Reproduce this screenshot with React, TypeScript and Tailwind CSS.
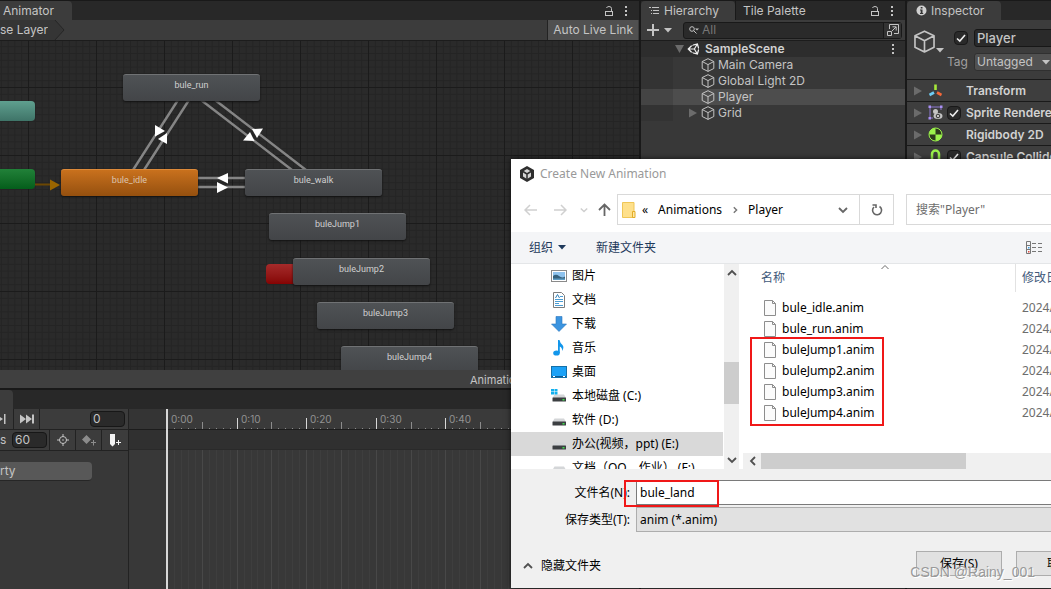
import { type ReactNode } from "react";
import { FaUnity } from "react-icons/fa";

interface StateNode {
  name: string;
  left: number;
  top: number;
  active?: boolean;
}

const nodes: StateNode[] = [
  { name: "bule_run", left: 123, top: 33 },
  { name: "bule_idle", left: 61, top: 128, active: true },
  { name: "bule_walk", left: 245, top: 128 },
  { name: "buleJump1", left: 269, top: 172 },
  { name: "buleJump2", left: 293, top: 217 },
  { name: "buleJump3", left: 317, top: 261 },
  { name: "buleJump4", left: 341, top: 305 },
];

const files = [
  "bule_idle.anim",
  "bule_run.anim",
  "buleJump1.anim",
  "buleJump2.anim",
  "buleJump3.anim",
  "buleJump4.anim",
];

const frameWidth = 6.96;

function Kebab() {
  return (
    <svg width="4" height="12" viewBox="0 0 4 12" fill="#c4c4c4">
      <rect x="1" y="1" width="2" height="2" />
      <rect x="1" y="5" width="2" height="2" />
      <rect x="1" y="9" width="2" height="2" />
    </svg>
  );
}

function Lock() {
  return (
    <svg width="10" height="12" viewBox="0 0 10 12" fill="none" stroke="#c4c4c4">
      <rect x="1.5" y="6.5" width="7" height="4" />
      <path d="M7.5 6.5V3.5Q7.500 1.500 5 1.500Q3 1.500 2.500 3" />
    </svg>
  );
}

function Cube({ size }: { size: number }) {
  return (
    <svg width={size} height={size} viewBox="0 0 14 14" fill="none" stroke="#c4c4c4" strokeWidth="1" strokeLinejoin="round">
      <path d="M7 .7 12.800 3.500V10.500L7 13.400 1.200 10.500V3.500ZM1.200 3.500 7 6.600 12.800 3.500M7 6.600V13.400" />
    </svg>
  );
}

function Caret({ color = "#c4c4c4" }: { color?: string }) {
  return (
    <svg width="8" height="5" viewBox="0 0 8 5" fill={color}>
      <path d="M0 0H8L4 4.500Z" />
    </svg>
  );
}

function Foldout() {
  return (
    <svg className="shrink-0" width="8" height="10" viewBox="0 0 8 10" fill="#6b6b6b">
      <path d="M0 0.500 8 5 0 9.500Z" />
    </svg>
  );
}

function Check({ label }: { label: string }) {
  return (
    <span className="grid size-[14px] shrink-0 place-items-center">
      <input
        type="checkbox"
        aria-label={label}
        defaultChecked
        className="peer col-start-1 row-start-1 size-[14px] appearance-none rounded-sm border border-[#191919] bg-[#2a2a2a]"
      />
      <svg
        className="pointer-events-none invisible col-start-1 row-start-1 peer-checked:visible"
        width="12"
        height="12"
        viewBox="0 0 12 12"
        fill="none"
        stroke="#eee"
        strokeWidth="1.6"
      >
        <path d="M2 6.500 4.800 9 10 3" />
      </svg>
    </span>
  );
}

function Chevron({ dir, color = "#505050", size = 10 }: { dir: "up" | "down" | "left" | "right"; color?: string; size?: number }) {
  const paths = {
    up: "M1 7 5 3 9 7",
    down: "M1 3 5 7 9 3",
    left: "M7 1 3 5 7 9",
    right: "M3.500 1.500 7 5 3.500 8.500",
  };
  return (
    <svg width={size} height={size} viewBox="0 0 10 10" fill="none" stroke={color} strokeWidth="1.800">
      <path d={paths[dir]} />
    </svg>
  );
}

function Transitions() {
  return (
    <svg className="absolute inset-0 size-full">
      <defs>
        <pattern id="minor" x="28" y="46" width="6.8" height="6.8" patternUnits="userSpaceOnUse">
          <path d="M.5 0V6.800M0 .5H6.800" stroke="#242424" />
        </pattern>
        <pattern id="major" x="28" y="46" width="68" height="68" patternUnits="userSpaceOnUse">
          <path d="M.5 0V68M0 .5H68" stroke="#1b1b1b" />
        </pattern>
      </defs>
      <rect width="100%" height="100%" fill="url(#minor)" />
      <rect width="100%" height="100%" fill="url(#major)" />
      <g stroke="#858585" strokeWidth="2.4">
        <path d="M178 59 133 129M189 59 144 129" />
        <path d="M201 59 292 129M215 59 306 129" />
        <path d="M198 137H245M198 146H245" />
      </g>
      <g fill="#fff">
        <path d="M155 84 165 90 155 95.500Z" />
        <path d="M158 98 167 92 167 103Z" />
        <path d="M243 99.500 250 91 254.500 100Z" />
        <path d="M252 88 263 87.500 257 97Z" />
        <path d="M217 137 228 132V142.500Z" />
        <path d="M228 146.500 217 141V152Z" />
      </g>
      <path d="M35 143.500H51" stroke="#6b4703" strokeWidth="2" />
      <path d="M50 138.500 60 144 50 149.500Z" fill="#9a6500" />
    </svg>
  );
}

function Animator() {
  return (
    <section className="flex min-h-0 flex-1 flex-col">
      <div className="flex h-[19px] items-stretch justify-between bg-[#282828] pr-[11px]">
        <button className="w-[72px] rounded-tr bg-[#3c3c3c] pl-[3px] text-left">Animator</button>
        <div className="flex items-center gap-[10px]">
          <Lock />
          <Kebab />
        </div>
      </div>
      <div className="flex h-[21px] items-stretch justify-between border-b border-[#1c1c1c] bg-[#3c3c3c]">
        <button className="flex items-center">
          <span className="flex h-full items-center bg-[#353535]">se Layer</span>
          <svg width="17" height="20" viewBox="0 0 17 20">
            <path d="M0 0H7L16 10 7 20H0Z" fill="#353535" />
            <path d="M7 0 16 10 7 20" fill="none" stroke="#262626" />
          </svg>
        </button>
        <button className="mr-px border-l border-[#232323] bg-[#505050] px-[5px]">Auto Live Link</button>
      </div>
      <div className="relative flex-1 overflow-hidden bg-[#2a2a2a]">
        <Transitions />
        <div className="absolute top-[60px] left-0 h-5 w-[35px] rounded-r-sm bg-linear-to-b from-[#5fa08f] to-[#3f7468]" />
        <div className="absolute top-[128px] left-0 h-5 w-[35px] rounded-r-sm bg-linear-to-b from-[#218139] to-[#045e1b]" />
        <div className="absolute top-[223px] left-[266px] h-5 w-[60px] rounded-sm bg-linear-to-b from-[#a52a2a] to-[#850303]" />
        {nodes.map((node) => (
          <div
            key={node.name}
            style={{ left: node.left, top: node.top }}
            className={`absolute h-[27px] w-[137px] rounded-[3px] border-t pt-[3px] text-center font-['Roboto',sans-serif] text-[9px] leading-[14px] shadow-[0_1px_2px_#111] ${
              node.active
                ? "border-[#dd8a3a] bg-linear-to-b from-[#c9711d] to-[#95500f] text-[#dcc4ae]"
                : "border-[#707274] bg-linear-to-b from-[#4f5255] to-[#434548] text-[#d0d0d0]"
            }`}
          >
            {node.name}
          </div>
        ))}
      </div>
      <div className="flex h-[18px] items-center justify-end bg-[#404040] pt-[2px]">
        <span className="w-[169px] text-[11px]">Animations</span>
      </div>
    </section>
  );
}

function Timeline() {
  const frames = Array.from({ length: 50 }, (_, i) => i);
  return (
    <svg className="min-w-0 flex-1" height="180">
      <rect width="100%" height="20" fill="#3a3a3a" />
      <rect width="37" height="20" fill="#343434" />
      <rect y="20" width="100%" height="1" fill="#1c1c1c" />
      <rect y="21" width="100%" height="19" fill="#303030" />
      <rect y="40" width="100%" height="1" fill="#2a2a2a" />
      {frames.map((f) => {
        const x = Math.round(38 + f * frameWidth);
        const tick = f % 10 === 0 ? 11 : f % 5 === 0 ? 7 : 1;
        return (
          <g key={f}>
            <rect x={x} y={20 - tick} width="1" height={tick} fill={f % 10 === 0 ? "#d8d8d8" : "#8c8c8c"} />
            <rect x={x} y="41" width="1" height="140" fill={f % 5 === 0 ? "#484848" : "#3e3e3e"} />
            {f % 10 === 0 && (
              <text x={x + 4} y="14" fontSize="10" fill="#929292">
                0:{String(f).padStart(2, "0")}
              </text>
            )}
          </g>
        );
      })}
      <rect x="37" width="2" height="180" fill="#d8d8d8" />
    </svg>
  );
}

function Animation() {
  return (
    <section className="border-t-2 border-[#191919]">
      <div className="h-[19px] bg-[#282828]">
        <div className="h-full w-[13px] rounded-tr bg-[#3c3c3c]" />
      </div>
      <div className="flex">
        <div className="w-[129px] border-r border-[#222] text-[12px]">
          <div className="flex h-[21px] items-center border-b border-[#222] bg-[#3c3c3c]">
            <button aria-label="Next frame" className="flex h-full w-[14px] items-center border-r border-[#222]">
              <svg width="6" height="10" viewBox="0 0 6 10" fill="#c4c4c4">
                <path d="M0 3 3 5 0 7ZM4 0H5.500V10H4Z" />
              </svg>
            </button>
            <button aria-label="Last frame" className="flex h-full w-[26px] items-center justify-center border-r border-[#222]">
              <svg width="14" height="10" viewBox="0 0 14 10" fill="#c4c4c4">
                <path d="M0 .5 6 5 0 9.500ZM6 .5 12 5 6 9.500ZM12 .5H14V9.500H12Z" />
              </svg>
            </button>
            <input aria-label="Current frame" defaultValue="0" className="mr-[3px] ml-auto h-4 w-[35px] rounded-sm border border-[#171717] bg-[#2a2a2a] px-[2px]" />
          </div>
          <div className="flex h-[21px] items-center border-b border-[#222] bg-[#3c3c3c]">
            <label htmlFor="samples" className="w-3">s</label>
            <input id="samples" defaultValue="60" className="h-4 w-[35px] rounded-sm border border-[#171717] bg-[#2a2a2a] px-[2px]" />
            <button aria-label="Filter by selection" className="ml-[2px] flex h-full w-[27px] items-center justify-center border-x border-[#222]">
              <svg width="12" height="12" viewBox="0 0 12 12" fill="none" stroke="#c4c4c4">
                <circle cx="6" cy="6" r="3.5" />
                <path d="M6 0V3M6 9V12M0 6H3M9 6H12" />
                <circle cx="6" cy="6" r=".8" fill="#c4c4c4" stroke="none" />
              </svg>
            </button>
            <button aria-label="Add keyframe" className="flex h-full w-[26px] items-center justify-center border-r border-[#222]">
              <svg width="14" height="12" viewBox="0 0 14 12" fill="#8c8c8c">
                <path d="M4.500 1 9 5.500 4.500 10 0 5.500ZM11 6H12V8H14V9H12V11.500H11V9H9V8H11Z" />
              </svg>
            </button>
            <button aria-label="Add event" className="flex h-full flex-1 items-center justify-center">
              <svg width="12" height="14" viewBox="0 0 12 14" fill="#f4f4f4">
                <path d="M1 1H6V11L3.500 13.500 1 11ZM9 7H10V9H12V10H10V12H9V10H7V9H9Z" />
              </svg>
            </button>
          </div>
          <div className="pt-[11px]">
            <button className="h-[19px] w-[92px] rounded-r-sm border-b border-[#262626] bg-[#585858] text-left leading-[18px]">rty</button>
          </div>
        </div>
        <Timeline />
      </div>
    </section>
  );
}

function HierarchyItem({ name, selected, parent }: { name: string; selected?: boolean; parent?: boolean }) {
  return (
    <li className={`flex h-4 items-center ${selected ? "bg-[#4d4d4d]" : ""}`}>
      <span className={`h-full w-8 ${selected ? "bg-[#444]" : "bg-[#333]"}`} />
      <span className="flex w-7 justify-end pr-1">{parent && <Foldout />}</span>
      <Cube size={14} />
      <span className="pl-[3px]">{name}</span>
    </li>
  );
}

function Hierarchy() {
  return (
    <section className="w-[268px] shrink-0 border-x-2 border-[#191919] bg-[#383838]">
      <div className="flex h-[19px] items-stretch bg-[#282828] pr-[11px]">
        <button className="flex w-[94px] items-center gap-1 rounded-t bg-[#3c3c3c] pl-2">
          <svg width="11" height="10" viewBox="0 0 11 10" fill="#c4c4c4">
            <path d="M0 1H2V2H0ZM3 1H10V2H3ZM2 4H3V5H2ZM4 4H10V5H4ZM2 7H3V8H2ZM4 7H10V8H4Z" />
          </svg>
          Hierarchy
        </button>
        <button className="border-l border-[#191919] pl-[7px]">Tile Palette</button>
        <div className="ml-auto flex items-center gap-[10px]">
          <Lock />
          <Kebab />
        </div>
      </div>
      <div className="flex h-[21px] items-center border-b border-[#1c1c1c] bg-[#3c3c3c] pr-[3px] pl-[6px]">
        <button aria-label="Create" className="flex items-center gap-[5px]">
          <svg width="12" height="12" viewBox="0 0 12 12" stroke="#c4c4c4" strokeWidth="2">
            <path d="M6 0V12M0 6H12" />
          </svg>
          <Caret />
        </button>
        <div className="ml-[11px] flex h-[17px] flex-1 items-center rounded-[3px] border border-[#191919] bg-[#2a2a2a] pl-[5px]">
          <svg width="11" height="10" viewBox="0 0 11 10" fill="none" stroke="#c4c4c4">
            <circle cx="3" cy="4" r="2.300" />
            <path d="M4.800 5.800 7.500 8.500" />
            <path d="M6 3.500H10L8 5.500Z" fill="#c4c4c4" stroke="none" />
          </svg>
          <input aria-label="Search hierarchy" placeholder="All" className="w-0 flex-1 pl-[2px] placeholder:text-[#777]" />
          <button aria-label="Open in search" className="flex h-full w-[18px] items-center justify-center border-l border-[#191919] bg-[#333]">
            <svg width="12" height="12" viewBox="0 0 12 12" fill="none" stroke="#c4c4c4">
              <path d="M2.500 5V.5H11.500V9.500H7M.5 7.500H4.500V11.500H.5ZM5 7 9 3M5.500 2.800H9.200V6.500" />
            </svg>
          </button>
        </div>
      </div>
      <div className="flex h-4 items-center bg-[#2d2d2d] pr-[10px] pl-[34px] font-semibold text-[#d2d2d2]">
        <svg width="10" height="8" viewBox="0 0 10 8" fill="#6b6b6b">
          <path d="M0 0H9L4.500 8Z" />
        </svg>
        <FaUnity className="ml-[2px] text-[14px] text-[#f0f0f0]" />
        <span className="flex-1 pl-1">SampleScene</span>
        <Kebab />
      </div>
      <ul>
        <HierarchyItem name="Main Camera" />
        <HierarchyItem name="Global Light 2D" />
        <HierarchyItem name="Player" selected />
        <HierarchyItem name="Grid" parent />
      </ul>
    </section>
  );
}

function ComponentRow({ name, icon, check }: { name: string; icon: ReactNode; check?: boolean }) {
  return (
    <div className="flex h-[22px] items-center border-t border-[#1a1a1a] bg-[#3e3e3e] pl-[7px]">
      <Foldout />
      <span className="ml-[6px] w-4 shrink-0">{icon}</span>
      <span className="ml-[3px] flex w-[19px] shrink-0">{check && <Check label={name} />}</span>
      <h3 className="font-semibold whitespace-nowrap text-[#d2d2d2]">{name}</h3>
    </div>
  );
}

function Inspector() {
  return (
    <section className="w-[144px] shrink-0 overflow-hidden bg-[#383838]">
      <div className="flex h-[19px] items-stretch bg-[#282828]">
        <button className="flex w-[94px] items-center gap-1 rounded-t bg-[#3c3c3c] pl-[9px]">
          <svg width="11" height="11" viewBox="0 0 11 11">
            <circle cx="5.500" cy="5.500" r="5" fill="#d0d0d0" />
            <path d="M4.700 2H6.500V3.500H4.700ZM4 4.500H6.500V8H7.200V9H4V8H4.700V5.500H4Z" fill="#333" />
          </svg>
          Inspector
        </button>
      </div>
      <div className="flex h-[59px] bg-[#3c3c3c] pt-[9px] pl-[6px]">
        <div className="flex h-6 w-[34px] shrink-0 items-end pt-1">
          <Cube size={23} />
          <Caret />
        </div>
        <div className="flex flex-1 flex-col gap-[6px]">
          <div className="flex items-center gap-[6px] pl-[7px]">
            <Check label="Active" />
            <input aria-label="Name" defaultValue="Player" className="h-[18px] w-20 rounded-[3px] border border-[#171717] bg-[#2a2a2a] px-[2px] text-[13px] font-medium" />
          </div>
          <div className="flex items-center">
            <label htmlFor="tag" className="w-[27px] shrink-0 text-[#a0a0a0]">Tag</label>
            <div className="relative">
              <select id="tag" className="h-[18px] w-[84px] appearance-none rounded-[3px] border border-[#303030] bg-[#515151] px-[2px]">
                <option>Untagged</option>
              </select>
              <span className="pointer-events-none absolute top-[7px] right-2">
                <Caret />
              </span>
            </div>
          </div>
        </div>
      </div>
      <ComponentRow
        name="Transform"
        icon={
          <svg width="15" height="15" viewBox="0 0 15 15" strokeWidth="2.600">
            <path d="M7.500 1.500V7" stroke="#a7e83a" />
            <path d="M6 9.500 1.500 12" stroke="#6fcdf5" />
            <path d="M9 9.500 13.500 12" stroke="#f4683a" />
          </svg>
        }
      />
      <ComponentRow
        name="Sprite Renderer"
        check
        icon={
          <svg width="15" height="15" viewBox="0 0 15 15" fill="none">
            <path d="M2 13V2H13V5M2 13H5" stroke="#8d78cf" />
            <path d="M.5 .5H3V3H.5ZM12 .5H14.500V3H12ZM.5 12H3V14.500H.5Z" fill="#a98ff5" />
            <circle cx="7.500" cy="6.500" r="2.500" fill="#c4c4c4" />
            <ellipse cx="10" cy="11" rx="4.500" ry="3" fill="#c4c4c4" />
            <circle cx="10" cy="11" r="1.800" fill="#c4c4c4" stroke="#333" />
          </svg>
        }
      />
      <ComponentRow
        name="Rigidbody 2D"
        icon={
          <svg width="15" height="15" viewBox="0 0 15 15">
            <circle cx="7.500" cy="7.500" r="6.500" fill="#2d3a1c" stroke="#9bf24b" />
            <path d="M7.500 7.500V1A6.500 6.500 0 0 0 1 7.500ZM7.500 7.500V14A6.500 6.500 0 0 0 14 7.500Z" fill="#9bf24b" />
          </svg>
        }
      />
      <ComponentRow
        name="Capsule Collider 2D"
        check
        icon={
          <svg width="15" height="15" viewBox="0 0 15 15">
            <rect x="4" y="1.500" width="7" height="13" rx="3.500" fill="none" stroke="#9bf24b" strokeWidth="2.500" />
          </svg>
        }
      />
    </section>
  );
}

function Drive({ system }: { system?: boolean }) {
  return (
    <svg width="16" height="16" viewBox="0 0 16 16">
      <path d="M3.500 6.500H13L15 10H1.500Z" fill="#d4d6d8" />
      <rect x="1.500" y="9.500" width="13.500" height="4" rx=".5" fill="#3c3f42" />
      <rect x="11.500" y="11" width="2" height="1.500" fill="#3fe04b" />
      {system && <path d="M0 1H3V3.500H0ZM3.500 1H6.500V3.500H3.500ZM0 4H3V6.500H0ZM3.500 4H6.500V6.500H3.500Z" fill="#12b0ee" />}
    </svg>
  );
}

const places = [
  {
    name: "图片",
    icon: (
      <svg width="16" height="16" viewBox="0 0 16 16">
        <rect x=".5" y="2.500" width="15" height="11" fill="#fff" stroke="#8a8a8a" />
        <rect x="2" y="4" width="12" height="8" fill="#8fc3ee" />
        <path d="M2 8Q5 5.500 8 8T14 8.500V12H2Z" fill="#35617d" />
        <path d="M2 10.500H14V12H2Z" fill="#5f9dc4" />
      </svg>
    ),
  },
  {
    name: "文档",
    icon: (
      <svg width="16" height="16" viewBox="0 0 16 16">
        <path d="M2.500 .5H10.500L13.500 3.500V15.500H2.500Z" fill="#fff" stroke="#7d7d7d" />
        <path d="M4 7.500H12M4 9.500H12M4 11.500H8M4 13.500H12M9 4.500H12" stroke="#4b9dd4" />
        <path d="M4.500 6 6.500 2.500 8.500 6" fill="none" stroke="#2f7fb8" />
      </svg>
    ),
  },
  {
    name: "下载",
    icon: (
      <svg width="16" height="16" viewBox="0 0 16 16">
        <path d="M5 .5H11V8H15.500L8 15.500 .5 8H5Z" fill="#3b94e0" stroke="#2a76bd" strokeWidth=".6" />
      </svg>
    ),
  },
  {
    name: "音乐",
    icon: (
      <svg width="16" height="16" viewBox="0 0 16 16" fill="#1296eb">
        <ellipse cx="5.500" cy="13" rx="3.300" ry="2.600" />
        <path d="M7 0H8.500Q9 3 11.500 5 13.500 7.500 11 11 11.500 7.500 8.800 6.500V13H7Z" />
      </svg>
    ),
  },
  {
    name: "桌面",
    icon: (
      <svg width="16" height="16" viewBox="0 0 16 16">
        <rect x=".5" y="2.500" width="15" height="11" fill="#1ba1f6" stroke="#1470a8" />
        <path d="M1 12H15V13H1Z" fill="#0c5a94" />
        <path d="M2 12H4V13H2ZM12 12H14V13H12Z" fill="#fff" />
      </svg>
    ),
  },
  { name: "本地磁盘 (C:)", icon: <Drive system /> },
  { name: "软件 (D:)", icon: <Drive /> },
  { name: "办公(视频，ppt) (E:)", icon: <Drive />, selected: true },
  { name: "文档（QQ，作业） (F:)", icon: <Drive /> },
];

function FileList() {
  return (
    <div className="relative flex min-w-0 flex-1 flex-col overflow-hidden">
      <table className="w-[420px] table-fixed text-left">
        <thead>
          <tr className="h-[33px] align-top text-[#41597a]">
            <th className="w-[273px] p-0 pl-[18px] font-normal">
              <div className="flex h-7 items-center border-r border-[#e2e2e2]">
                名称
                <span className="ml-[96px] self-start">
                  <svg width="8" height="6" viewBox="0 0 8 6" fill="none" stroke="#6b6b6b">
                    <path d="M.5 5 4 1.500 7.500 5" />
                  </svg>
                </span>
              </div>
            </th>
            <th className="p-0 pl-[6px] leading-7 font-normal">修改日期</th>
          </tr>
        </thead>
        <tbody>
          {files.map((file) => (
            <tr key={file} className="h-[21px]">
              <td className="p-0 pl-[21px]">
                <div className="flex items-center gap-[6px]">
                  <svg width="12" height="16" viewBox="0 0 12 16">
                    <path d="M.5 .5H8.500L11.500 3.500V15.500H.5Z" fill="#fbfbfb" stroke="#8d8d8d" />
                    <path d="M8.500 .5V3.500H11.500" fill="none" stroke="#8d8d8d" />
                  </svg>
                  {file}
                </div>
              </td>
              <td className="p-0 pl-[6px] text-[#6d6d6d]">2024/</td>
            </tr>
          ))}
        </tbody>
      </table>
      <div className="absolute top-[73px] left-[7px] h-[89px] w-[134px] border-2 border-[#f01818]" />
      <div className="mt-auto flex h-4 items-center bg-[#f0f0f0] pl-[5px]">
        <Chevron dir="left" />
        <div className="ml-[3px] h-full w-[205px] bg-[#cdcdcd]" />
      </div>
    </div>
  );
}

function SaveDialog() {
  return (
    <div
      role="dialog"
      aria-label="Create New Animation"
      className="absolute top-[158px] right-0 left-[511px] overflow-hidden bg-white font-['Noto_Sans','Noto_Sans_CJK_SC',sans-serif] text-[12px] text-black shadow-[0_0_6px_#000a]"
    >
      <div className="flex h-[30px] items-center gap-[6px] pl-[9px] text-[#999]">
        <svg width="14" height="16" viewBox="0 0 14 16">
          <path d="M7 0 14 4V12L7 16 0 12V4Z" fill="#2e2e2e" />
          <path d="M7 3 11 5.500V10.500L7 13 3 10.500V5.500Z" fill="#d5d5d5" />
          <path d="M7 8V13M7 8 3 5.500M7 8 11 5.500" stroke="#2e2e2e" strokeWidth="1.500" />
        </svg>
        Create New Animation
      </div>
      <div className="flex items-center pt-[5px] pb-[7px]">
        <div className="flex w-[106px] items-center pl-[13px]">
          <button aria-label="Back">
            <svg width="13" height="12" viewBox="0 0 13 12" fill="none" stroke="#d0d0d0" strokeWidth="1.500">
              <path d="M13 6H1M6 1 1 6 6 11" />
            </svg>
          </button>
          <button aria-label="Forward" className="ml-[17px]">
            <svg width="13" height="12" viewBox="0 0 13 12" fill="none" stroke="#d0d0d0" strokeWidth="1.500">
              <path d="M0 6H12M7 1 12 6 7 11" />
            </svg>
          </button>
          <button aria-label="Recent" className="ml-[13px]">
            <Chevron dir="down" color="#cfcfcf" size={8} />
          </button>
          <button aria-label="Up" className="ml-[10px]">
            <svg width="13" height="13" viewBox="0 0 13 13" fill="none" stroke="#666" strokeWidth="1.800">
              <path d="M6.500 13V1.500M1 7 6.500 1.500 12 7" />
            </svg>
          </button>
        </div>
        <div className="flex h-[31px] w-[277px] items-center border border-[#d9d9d9] pl-1">
          <svg width="14" height="16" viewBox="0 0 14 16">
            <path d="M.5 .5H12V15.500H.5Z" fill="#fee08b" stroke="#efc656" />
            <path d="M10.500 9.500H13V15.500H10.500Z" fill="#ffe9a6" stroke="#e3ad27" />
          </svg>
          <span className="pl-[6px]">«</span>
          <span className="pl-[10px]">Animations</span>
          <span className="px-[9px]"><Chevron dir="right" color="#777" size={8} /></span>
          <span className="flex-1">Player</span>
          <button aria-label="History" className="mr-[11px]">
            <Chevron dir="down" color="#666" />
          </button>
          <button aria-label="Refresh" className="flex h-full w-[34px] items-center justify-center border-l border-[#d9d9d9]">
            <svg width="12" height="12" viewBox="0 0 12 12" fill="none" stroke="#666" strokeWidth="1.600">
              <path d="M8.500 2.500A4.500 4.500 0 1 1 3 3M5 4V1H1.500" />
            </svg>
          </button>
        </div>
        <input aria-label="搜索" placeholder={'搜索"Player"'} className="ml-3 h-[31px] w-0 flex-1 border border-r-0 border-[#d9d9d9] px-[9px] placeholder:text-[#6d6d6d]" />
      </div>
      <div className="flex h-8 items-center border-b border-[#e4e6e8] bg-[#f4f5f7] pr-[9px] pl-[18px] text-[#1e395b]">
        <button className="flex items-center gap-[5px]">
          组织 <Caret color="#1e395b" />
        </button>
        <button className="ml-[30px]">新建文件夹</button>
        <button aria-label="View" className="ml-auto">
          <svg width="16" height="13" viewBox="0 0 16 13" fill="none" stroke="#777">
            <path d="M.5 .5H4.500V12.500H.5ZM.5 4.500H4.500M.5 8.500H4.500M6 2.500H10M12 2.500H16M6 6.500H10M12 6.500H16M6 10.500H10M12 10.500H16" />
            <path d="M2 6H3.500V7.500H2Z" fill="#3d9be0" stroke="none" />
            <path d="M2 10H3.500V11.500H2Z" fill="#e04a3d" stroke="none" />
          </svg>
        </button>
      </div>
      <div className="flex h-[205px]">
        <ul className="w-[212px] overflow-hidden">
          {places.map((place) => (
            <li key={place.name} className={`flex h-6 items-center gap-[5px] pl-10 whitespace-nowrap ${place.selected ? "bg-[#d9d9d9]" : ""}`}>
              {place.icon}
              {place.name}
            </li>
          ))}
        </ul>
        <div className="ml-px flex w-[15px] flex-col items-center justify-between bg-[#f0f0f0] py-1">
          <Chevron dir="up" />
          <div className="mt-8 h-[42px] w-full bg-[#cdcdcd]" />
          <Chevron dir="down" />
        </div>
        <div className="ml-1 flex min-w-0 flex-1">
          <FileList />
        </div>
      </div>
      <div className="bg-[#f0f0f0] pt-[11px] pb-3">
        <div className="relative flex flex-col gap-[2px]">
          <div className="flex items-center">
            <label htmlFor="filename" className="w-[125px] pr-[6px] text-right">文件名(N):</label>
            <input id="filename" defaultValue="bule_land" className="h-[25px] w-0 flex-1 border border-r-0 border-[#7a7a7a] bg-white px-[3px]" />
          </div>
          <div className="flex items-center">
            <label htmlFor="filetype" className="w-[125px] pr-[6px] text-right">保存类型(T):</label>
            <select id="filetype" className="h-[25px] w-0 flex-1 appearance-none border border-r-0 border-[#adadad] bg-[#e1e1e1] px-[3px]">
              <option>anim (*.anim)</option>
            </select>
          </div>
          <div className="absolute top-0 left-[113px] h-[27px] w-[95px] border-2 border-[#f01818]" />
        </div>
        <div className="flex items-center pt-[19px] pl-3">
          <button className="flex items-center gap-2 pt-[5px]">
            <Chevron dir="up" />
            隐藏文件夹
          </button>
          <button className="mr-[14px] ml-auto h-[25px] w-[86px] border border-[#adadad] bg-[#e1e1e1] leading-5">保存(S)</button>
          <button className="h-[25px] w-[35px] overflow-hidden border border-r-0 border-[#adadad] bg-[#e1e1e1] pl-[30px] text-left leading-5 whitespace-nowrap">取消</button>
        </div>
      </div>
    </div>
  );
}

export default function App() {
  return (
    <main className="relative flex h-screen overflow-hidden border-t border-[#191919] bg-[#383838] font-['Inter','Roboto',sans-serif] text-[12px] leading-4 text-[#c4c4c4]">
      <div className="flex min-w-0 flex-1 flex-col">
        <Animator />
        <Animation />
      </div>
      <Hierarchy />
      <Inspector />
      <SaveDialog />
      <div className="absolute right-4 bottom-[9px] font-['Liberation_Sans',sans-serif] text-[14px] text-[#9a9a9a] [text-shadow:1px_1px_0_#fff]">
        CSDN @Rainy_001
      </div>
    </main>
  );
}
